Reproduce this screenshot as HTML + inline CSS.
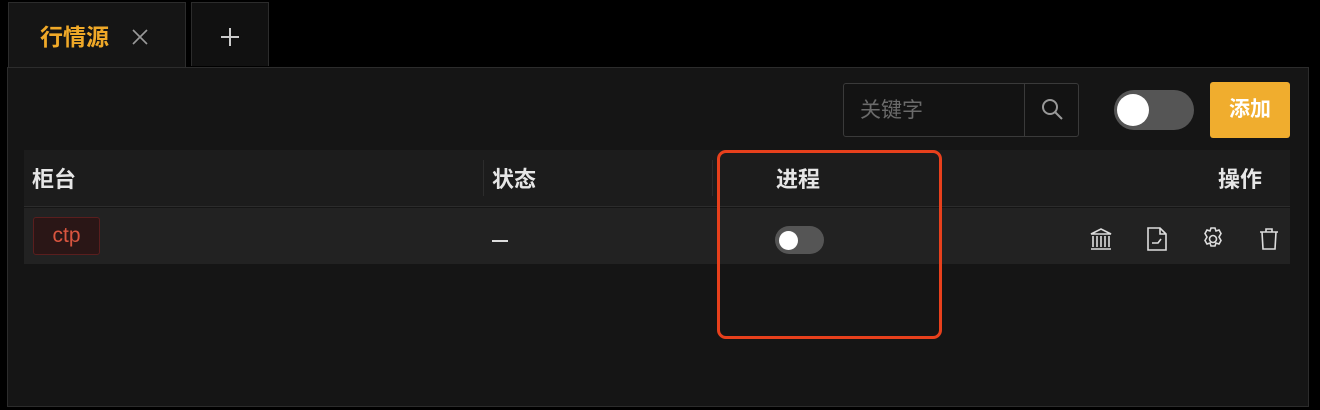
<!DOCTYPE html>
<html><head><meta charset="utf-8"><style>
*{margin:0;padding:0;box-sizing:border-box}
body{width:1320px;height:410px;background:#000;position:relative;overflow:hidden;font-family:"Liberation Sans","Noto Sans CJK SC",sans-serif;color:#e8e8e8}
.a{position:absolute}
.t{font-size:22px;font-weight:bold;color:#e6e6e6;line-height:24px}
</style></head><body>
<div class="a" style="left:8px;top:2px;width:178px;height:66px;background:#151515;border:1px solid #2c2c2c;border-bottom:none"></div>
<div class="a" style="left:40px;top:24px;font-size:23px;line-height:26px;font-weight:bold;color:#f0a928">行情源</div>
<svg class="a" style="left:131px;top:28px" width="18" height="18" viewBox="0 0 18 18"><path d="M2 2l14 14M16 2L2 16" stroke="#999" stroke-width="1.6"/></svg>
<div class="a" style="left:191px;top:2px;width:78px;height:64px;background:#111;border:1px solid #2c2c2c;border-bottom:none"></div>
<svg class="a" style="left:220px;top:27px" width="20" height="20" viewBox="0 0 20 20"><path d="M10 1v18M1 10h18" stroke="#ccc" stroke-width="2"/></svg>
<div class="a" style="left:7px;top:67px;width:1302px;height:340px;background:#151515;border:1px solid #2c2c2c"></div>
<div class="a" style="left:843px;top:83px;width:236px;height:54px;border:1px solid #3a3a3a;border-radius:3px;background:#131313"></div>
<div class="a" style="left:1024px;top:84px;width:1px;height:52px;background:#3a3a3a"></div>
<div class="a" style="left:860px;top:99px;font-size:21px;line-height:24px;color:#6a6a6a">关键字</div>
<svg class="a" style="left:1038px;top:96px" width="28" height="28" viewBox="0 0 28 28"><circle cx="12" cy="11" r="7" fill="none" stroke="#999" stroke-width="2"/><path d="M17 16l7 7" stroke="#999" stroke-width="2"/></svg>
<div class="a" style="left:1114px;top:90px;width:80px;height:40px;border-radius:20px;background:#555"></div>
<div class="a" style="left:1117px;top:94px;width:32px;height:32px;border-radius:50%;background:#fff"></div>
<div class="a" style="left:1210px;top:82px;width:80px;height:56px;border-radius:3px;background:#f0ad2e;color:#fff;font-size:21px;font-weight:bold;text-align:center;line-height:56px">添加</div>
<div class="a" style="left:24px;top:150px;width:1266px;height:57px;background:#1c1c1c;border-bottom:1px solid #2c2c2c"></div>
<div class="a" style="left:483px;top:160px;width:1px;height:36px;background:#2c2c2c"></div>
<div class="a" style="left:712px;top:160px;width:1px;height:36px;background:#2c2c2c"></div>
<div class="a t" style="left:32px;top:168px">柜台</div>
<div class="a t" style="left:492px;top:168px">状态</div>
<div class="a t" style="left:776px;top:168px">进程</div>
<div class="a t" style="left:1218px;top:168px">操作</div>
<div class="a" style="left:24px;top:208px;width:1266px;height:56px;background:#222"></div>
<div class="a" style="left:33px;top:217px;width:67px;height:38px;border:1px solid #5a1e1e;background:#2a1616;border-radius:3px;color:#d9553f;font-size:21px;text-align:center;line-height:36px">ctp</div>
<div class="a" style="left:492px;top:240px;width:16px;height:2px;background:#ddd"></div>
<div class="a" style="left:775px;top:226px;width:49px;height:28px;border-radius:14px;background:#555"></div>
<div class="a" style="left:779px;top:231px;width:19px;height:19px;border-radius:50%;background:#fff"></div>
<svg class="a" style="left:1088px;top:226px" width="26" height="26" viewBox="0 0 26 26" fill="none" stroke="#ddd" stroke-width="1.6"><path d="M3 8L13 3l10 5z M5 10v11 M9 10v11 M13 10v11 M17 10v11 M21 10v11 M3 23h20"/></svg>
<svg class="a" style="left:1145px;top:226px" width="24" height="26" viewBox="0 0 24 26" fill="none" stroke="#ddd" stroke-width="1.6"><path d="M3 2h12l6 6v16H3z M15 2v6h6 M7 17h6l3-4"/></svg>
<svg class="a" style="left:1200px;top:226px" width="26" height="26" viewBox="0 0 26 26" fill="none" stroke="#ddd" stroke-width="1.6"><path d="M11 2h4l1 3 3-1 2 3.5-2 3.5 2 3.5-2 3.5-3-1-1 3h-4l-1-3-3 1-2-3.5 2-3.5-2-3.5 2-3.5 3 1z"/><circle cx="13" cy="13" r="3.5"/></svg>
<svg class="a" style="left:1257px;top:226px" width="24" height="26" viewBox="0 0 24 26" fill="none" stroke="#ddd" stroke-width="1.6"><path d="M3 6h18 M9 6V3h6v3 M5 6l1 17h12l1-17"/></svg>
<div class="a" style="left:717px;top:150px;width:225px;height:189px;border:3px solid #e8401c;border-radius:9px"></div>
</body></html>
